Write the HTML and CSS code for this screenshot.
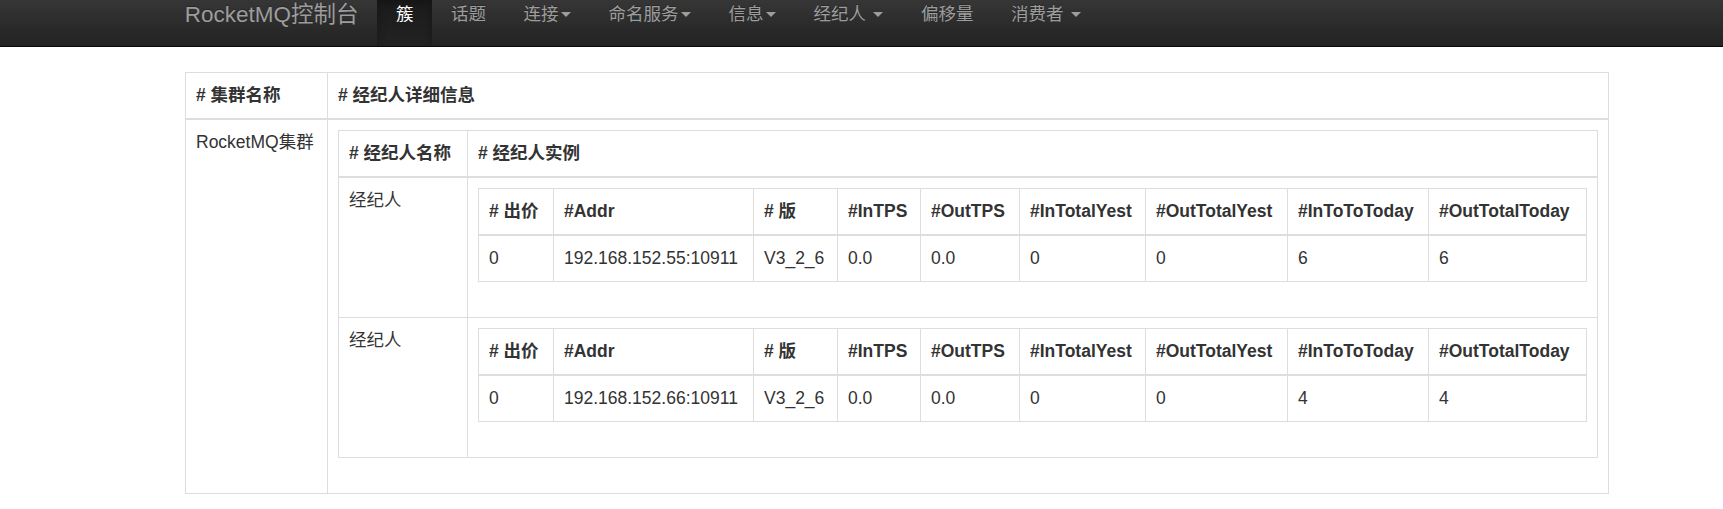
FILE: index.html
```html
<!DOCTYPE html>
<html lang="zh-CN">
<head>
  <meta charset="UTF-8">
  <title>RocketMQ控制台</title>
  <link rel="stylesheet" href="styles.css">
</head>
<body>
  <nav class="navbar">
    <div class="navbar-inner">
      <a class="brand" href="#">RocketMQ控制台</a>
      <ul class="nav">
        <li class="active"><a href="#">簇</a></li>
        <li><a href="#">话题</a></li>
        <li><a href="#">连接<span class="caret"></span></a></li>
        <li><a href="#">命名服务<span class="caret"></span></a></li>
        <li><a href="#">信息<span class="caret"></span></a></li>
        <li><a href="#">经纪人 <span class="caret"></span></a></li>
        <li><a href="#">偏移量</a></li>
        <li><a href="#">消费者 <span class="caret"></span></a></li>
      </ul>
    </div>
  </nav>

  <div class="container">
    <table class="table cluster-table">
      <colgroup><col class="col-cluster"><col></colgroup>
      <thead>
        <tr><th># 集群名称</th><th># 经纪人详细信息</th></tr>
      </thead>
      <tbody>
        <tr>
          <td>RocketMQ集群</td>
          <td>
            <table class="table broker-table">
              <colgroup><col class="col-broker"><col></colgroup>
              <thead>
                <tr><th># 经纪人名称</th><th># 经纪人实例</th></tr>
              </thead>
              <tbody>
                <tr>
                  <td>经纪人</td>
                  <td>
                    <table class="table instance-table">
                      <colgroup>
                        <col class="c-idx"><col class="c-addr"><col class="c-ver"><col class="c-intps"><col class="c-outtps">
                        <col class="c-inyest"><col class="c-outyest"><col class="c-intoday"><col class="c-outtoday">
                      </colgroup>
                      <thead>
                        <tr><th># 出价</th><th>#Addr</th><th># 版</th><th>#InTPS</th><th>#OutTPS</th><th>#InTotalYest</th><th>#OutTotalYest</th><th>#InToToToday</th><th>#OutTotalToday</th></tr>
                      </thead>
                      <tbody>
                        <tr><td>0</td><td>192.168.152.55:10911</td><td>V3_2_6</td><td>0.0</td><td>0.0</td><td>0</td><td>0</td><td>6</td><td>6</td></tr>
                      </tbody>
                    </table>
                  </td>
                </tr>
                <tr>
                  <td>经纪人</td>
                  <td>
                    <table class="table instance-table">
                      <colgroup>
                        <col class="c-idx"><col class="c-addr"><col class="c-ver"><col class="c-intps"><col class="c-outtps">
                        <col class="c-inyest"><col class="c-outyest"><col class="c-intoday"><col class="c-outtoday">
                      </colgroup>
                      <thead>
                        <tr><th># 出价</th><th>#Addr</th><th># 版</th><th>#InTPS</th><th>#OutTPS</th><th>#InTotalYest</th><th>#OutTotalYest</th><th>#InToToToday</th><th>#OutTotalToday</th></tr>
                      </thead>
                      <tbody>
                        <tr><td>0</td><td>192.168.152.66:10911</td><td>V3_2_6</td><td>0.0</td><td>0.0</td><td>0</td><td>0</td><td>4</td><td>4</td></tr>
                      </tbody>
                    </table>
                  </td>
                </tr>
              </tbody>
            </table>
          </td>
        </tr>
      </tbody>
    </table>
  </div>
</body>
</html>
```

FILE: styles.css
```css
/* base */
body {
  margin: 0;
  font-family: "Liberation Sans", "Noto Sans CJK SC", sans-serif;
  font-size: 17.5px;
  line-height: 25px;
  color: #333;
  background: #fff;
}
a {
  text-decoration: none;
}

/* top navbar */
.navbar {
  height: 46px;
  background: linear-gradient(to bottom, #363636 0%, #222 100%);
  border-bottom: 1px solid #080808;
}
.navbar-inner {
  display: flex;
  margin-left: 166px;
  height: 100%;
}
.brand {
  padding: 2px 18.75px 0;
  font-size: 22.5px;
  line-height: 25px;
  color: #9d9d9d;
  text-shadow: 0 -1px 0 rgba(0, 0, 0, 0.25);
}
.nav {
  display: flex;
  margin: 0;
  padding: 0;
  list-style: none;
}
.nav li a {
  display: block;
  height: 100%;
  box-sizing: border-box;
  padding: 1.5px 18.75px 0;
  color: #9d9d9d;
  text-shadow: 0 -1px 0 rgba(0, 0, 0, 0.25);
}
.nav li.active a {
  color: #fff;
  background: linear-gradient(to bottom, #1b1b1b 0%, #222 100%);
  box-shadow: inset 0 3px 9px rgba(0, 0, 0, 0.25);
}
.caret {
  display: inline-block;
  width: 0;
  height: 0;
  margin-left: 2.5px;
  vertical-align: middle;
  border-top: 5px solid #9d9d9d;
  border-left: 5px solid transparent;
  border-right: 5px solid transparent;
}

/* tables */
.container {
  width: 1424px;
  margin: 25px 0 0 185px;
}
.table {
  width: 100%;
  margin-bottom: 25px;
  border-collapse: collapse;
  border-spacing: 0;
  table-layout: fixed;
  border: 1px solid #ddd;
}
.table th,
.table td {
  padding: 10px;
  border: 1px solid #ddd;
  text-align: left;
  vertical-align: top;
  white-space: nowrap;
}
.table thead th {
  vertical-align: bottom;
  border-bottom: 2px solid #ddd;
  font-weight: bold;
}
.cluster-table {
  margin-bottom: 0;
}
.col-cluster { width: 142px; }
.col-broker { width: 129px; }

.c-idx { width: 75px; }
.c-addr { width: 200px; }
.c-ver { width: 84px; }
.c-intps { width: 83px; }
.c-outtps { width: 99px; }
.c-inyest { width: 126px; }
.c-outyest { width: 142px; }
.c-intoday { width: 141px; }
.c-outtoday { width: 158px; }
```
